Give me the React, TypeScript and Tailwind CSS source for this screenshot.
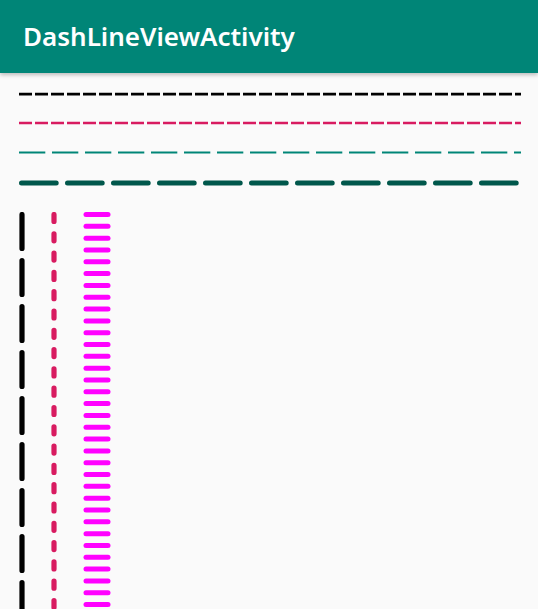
import React from 'react';

const W = 502;

function HLine({ color, width, dash, cap = 'butt', y = 15, x1 = 0, x2 = W }: { color: string; width: number; dash: string; cap?: 'butt' | 'round'; y?: number; x1?: number; x2?: number }) {
  return (
    <svg width={W} height={30} className="block">
      <line x1={x1} y1={y} x2={x2} y2={y} stroke={color} strokeWidth={width} strokeDasharray={dash} strokeLinecap={cap} />
    </svg>
  );
}

export default function App() {
  const H = 400;
  const bars = Array.from({ length: 34 });

  return (
    <div className="min-h-screen bg-[#fafafa] overflow-hidden" style={{ height: 609 }}>
      {/* Toolbar */}
      <div className="h-[73px] bg-[#008577] flex items-center pl-[23px] shadow-[0_2px_4px_rgba(0,0,0,0.25)] relative z-10">
        <h1 className="text-white text-[26px] font-semibold font-['Noto_Sans',sans-serif] leading-none -mt-[1px]">DashLineViewActivity</h1>
      </div>

      {/* Horizontal lines */}
      <div className="pl-[19px] pt-[5.5px]">
        <HLine color="#000000" width={2.7} dash="13 3" y={15.2} />
        <HLine color="#D81B60" width={2.4} dash="13 3" y={14} />
        <HLine color="#008577" width={2.2} dash="26.3 6.7" y={13.5} />
        <HLine color="#00574B" width={5} dash="34.7 11.3" cap="round" y={14} x1={2.5} x2={W - 3.5} />
      </div>

      {/* Vertical lines */}
      <div className="flex items-start pt-[13px]">
        <svg width={6} height={H} className="block ml-[19px]">
          <line x1={3} y1={2.5} x2={3} y2={H} stroke="#000000" strokeWidth={5.2} strokeDasharray="34 12" strokeLinecap="round" />
        </svg>
        <svg width={6} height={H} className="block ml-[26px]">
          <line x1={3} y1={2.5} x2={3} y2={H} stroke="#D81B60" strokeWidth={5.2} strokeDasharray="7 12.3" strokeLinecap="round" />
        </svg>
        <svg width={28} height={H} className="block ml-[26px]">
          {bars.map((_, i) => (
            <rect key={i} x={0.5} y={i * 11.82} width={27} height={5} rx={2.5} fill="#FF00FF" />
          ))}
        </svg>
      </div>
    </div>
  );
}
